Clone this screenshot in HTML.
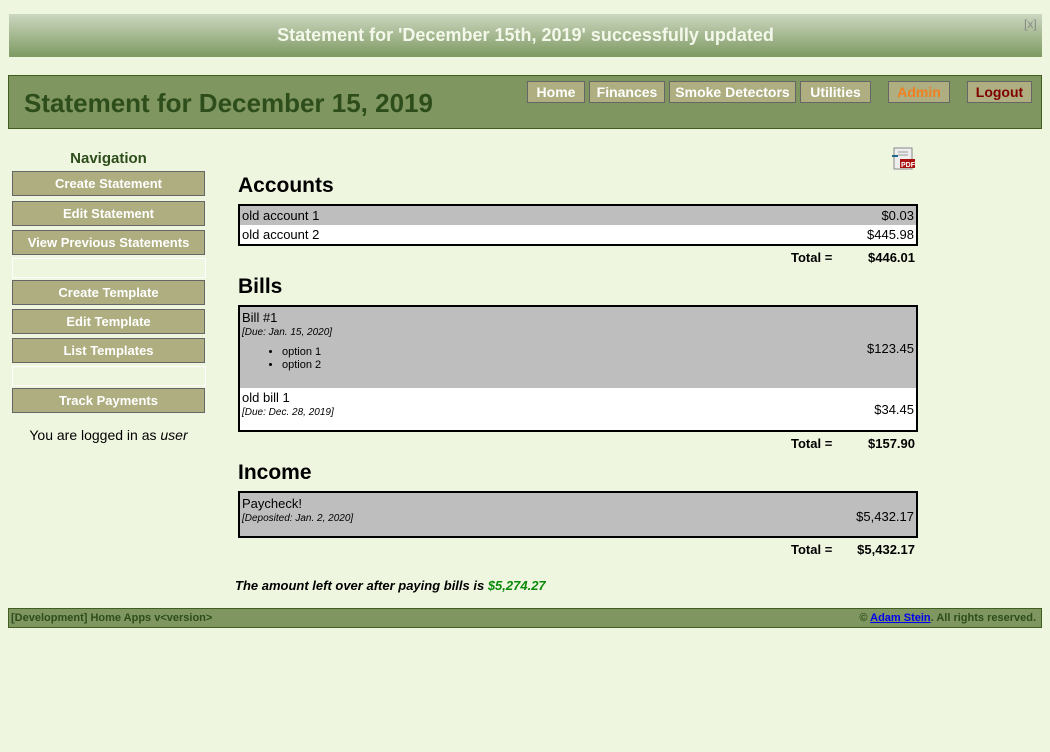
<!DOCTYPE html>
<html><head><style>
body{margin:0;background:#eff6e0;font-family:"Liberation Sans",sans-serif;width:1050px;height:752px;position:relative;overflow:hidden}
.a{position:absolute}
.flash{left:9px;top:14px;width:1033px;height:43px;background:linear-gradient(#ccd7c0,#7e9a62);color:#f4f8ea;font-weight:bold;font-size:18px;text-align:center;line-height:42px}
.hdr{left:8px;top:75px;width:1032px;height:52px;background:#7f9661;border:1px solid #3f5e1f}
.hdr h1{position:absolute;left:15px;top:12px;margin:0;font-size:26px;color:#2d4d1a}
.tb{position:absolute;top:5px;background:#aeae80;border:1px solid #666;color:#fff;font-weight:bold;font-size:14px;text-align:center;line-height:20px;box-sizing:border-box;height:22px}
.nb{position:absolute;left:12px;width:193px;height:25px;box-sizing:border-box;background:#aeae80;border:1px solid #666;color:#fff;font-weight:bold;font-size:13px;text-align:center;line-height:23px}
.sp{position:absolute;left:12px;width:194px;height:20px;box-sizing:border-box;border:1px solid #fff}
h2{position:absolute;margin:0;font-size:21px;color:#000}
.t{position:absolute;left:238px;width:680px;box-sizing:border-box;border:2px solid #000;font-size:13px}
.r{position:relative;padding:0 2px}
.g{background:#bebebe}.w{background:#fff}
.v{position:absolute;right:2px}
.d{font-size:10px;font-style:italic}
.tot{position:absolute;font-weight:bold;font-size:13px}
.tv{position:absolute;font-weight:bold;font-size:13px;right:135px;text-align:right}
</style></head><body>
<div class="a flash">Statement for 'December 15th, 2019' successfully updated</div>
<div class="a" style="left:1024px;top:17px;font-size:12px;color:#888">[x]</div>
<div class="a hdr"><h1>Statement for December 15, 2019</h1>
<div class="tb" style="left:518px;width:58px">Home</div>
<div class="tb" style="left:580px;width:76px">Finances</div>
<div class="tb" style="left:660px;width:127px">Smoke Detectors</div>
<div class="tb" style="left:791px;width:71px">Utilities</div>
<div class="tb" style="left:879px;width:62px;color:#f08020">Admin</div>
<div class="tb" style="left:958px;width:65px;color:#800000">Logout</div>
</div>
<div class="a" style="left:12px;width:193px;top:150px;text-align:center;font-weight:bold;font-size:15px;color:#2d4d1a">Navigation</div>
<div class="nb" style="top:171px">Create Statement</div>
<div class="nb" style="top:201px">Edit Statement</div>
<div class="nb" style="top:230px">View Previous Statements</div>
<div class="sp" style="top:258px"></div>
<div class="nb" style="top:280px">Create Template</div>
<div class="nb" style="top:309px">Edit Template</div>
<div class="nb" style="top:338px">List Templates</div>
<div class="sp" style="top:366px"></div>
<div class="nb" style="top:388px">Track Payments</div>
<div class="a" style="left:12px;width:193px;top:427px;text-align:center;font-size:14px">You are logged in as <i>user</i></div>
<svg class="a" style="left:891px;top:147px" width="24" height="23"><rect x="3" y="1" width="18" height="21" fill="#eee" stroke="#888"/><line x1="7" y1="5" x2="17" y2="5" stroke="#999"/><line x1="7" y1="8" x2="17" y2="8" stroke="#999"/><rect x="9" y="12" width="15" height="9" fill="#a11"/><text x="10" y="20" font-size="7" fill="#fff" font-weight="bold" font-family="Liberation Sans">PDF</text><path d="M1 9h6" stroke="#268" stroke-width="2"/></svg>
<h2 style="left:238px;top:174px">Accounts</h2>
<div class="t" style="top:204px;height:42px"><div class="r g" style="height:19px;line-height:19px">old account 1<span class="v">$0.03</span></div><div class="r w" style="height:19px;line-height:19px">old account 2<span class="v">$445.98</span></div></div>
<div class="tot" style="left:791px;top:250px">Total =</div><div class="tv" style="top:250px">$446.01</div>
<h2 style="left:238px;top:275px">Bills</h2>
<div class="t" style="top:305px;height:127px">
<div class="r g" style="height:81px;line-height:15px;padding-top:3px;box-sizing:border-box">Bill #1<div class="d">[Due: Jan. 15, 2020]</div><ul style="margin:6px 0 0;padding-left:40px;font-size:11px;line-height:13px"><li>option 1</li><li>option 2</li></ul><span class="v" style="top:34px">$123.45</span></div>
<div class="r w" style="height:42px;line-height:15px;padding-top:2px;box-sizing:border-box">old bill 1<div class="d">[Due: Dec. 28, 2019]</div><span class="v" style="top:14px">$34.45</span></div></div>
<div class="tot" style="left:791px;top:436px">Total =</div><div class="tv" style="top:436px">$157.90</div>
<h2 style="left:238px;top:461px">Income</h2>
<div class="t" style="top:491px;height:47px"><div class="r g" style="height:43px;line-height:15px;padding-top:3px;box-sizing:border-box">Paycheck!<div class="d">[Deposited: Jan. 2, 2020]</div><span class="v" style="top:16px">$5,432.17</span></div></div>
<div class="tot" style="left:791px;top:542px">Total =</div><div class="tv" style="top:542px">$5,432.17</div>
<div class="a" style="left:235px;top:578px;font-size:13px;font-weight:bold;font-style:italic">The amount left over after paying bills is <span style="color:#0a8a0a">$5,274.27</span></div>
<div class="a" style="left:8px;top:608px;width:1032px;height:18px;background:#7f9661;border:1px solid #3f5e1f;font-size:11px;font-weight:bold;color:#2d4d1a;line-height:18px">
<span style="position:absolute;left:2px">[Development] Home Apps v&lt;version&gt;</span>
<span style="position:absolute;right:5px">© <a style="color:#00e;text-decoration:underline">Adam Stein</a>. All rights reserved.</span></div>
</body></html>
